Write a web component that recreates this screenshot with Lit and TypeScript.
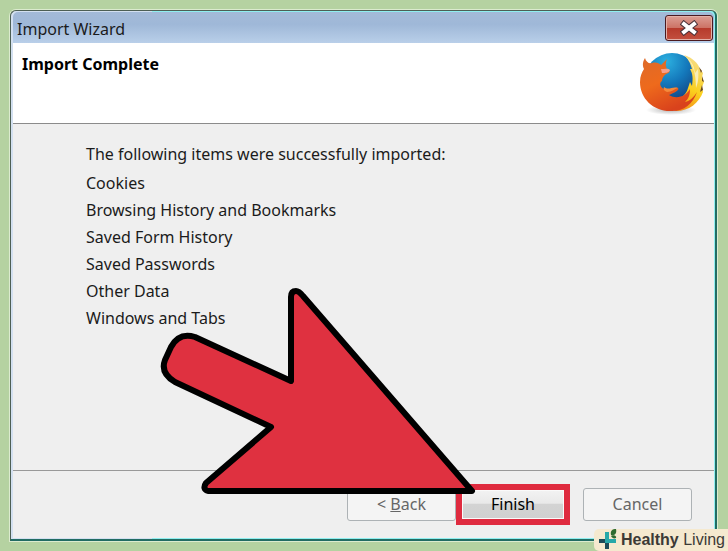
import { LitElement, html, css } from "lit";
import { customElement } from "lit/decorators.js";

const IMPORTED = [
  "Cookies",
  "Browsing History and Bookmarks",
  "Saved Form History",
  "Saved Passwords",
  "Other Data",
  "Windows and Tabs",
];

@customElement("firefox-logo")
class FirefoxLogo extends LitElement {
  static styles = css`
    :host { display: block; width: 68px; height: 64px; }
    svg { display: block; width: 100%; height: 100%; }
  `;
  render() {
    return html`
      <svg viewBox="0 0 68 64" aria-hidden="true">
        <defs>
          <radialGradient id="globe" cx="0.4" cy="0.15" r="0.85">
            <stop offset="0" stop-color="#2cb0e0" />
            <stop offset="0.45" stop-color="#1478bb" />
            <stop offset="1" stop-color="#12336f" />
          </radialGradient>
          <linearGradient id="fur" x1="0" y1="0" x2="0.5" y2="1">
            <stop offset="0" stop-color="#dd6a2a" />
            <stop offset="0.5" stop-color="#ee6a1c" />
            <stop offset="1" stop-color="#d9421c" />
          </linearGradient>
          <linearGradient id="tail" x1="0.6" y1="0" x2="0.2" y2="1">
            <stop offset="0" stop-color="#f6dc80" />
            <stop offset="0.5" stop-color="#fbd01d" />
            <stop offset="1" stop-color="#ef7a1a" />
          </linearGradient>
          <radialGradient id="shade">
            <stop offset="0" stop-color="#777" stop-opacity="0.55" />
            <stop offset="1" stop-color="#777" stop-opacity="0" />
          </radialGradient>
        </defs>
        <ellipse cx="33" cy="59" rx="25" ry="5" fill="url(#shade)" />
        <circle cx="34" cy="30" r="28" fill="url(#globe)" />
        <path fill="url(#tail)" d="M46 4 C55 7 60 12 62 18 L65 22 L64 26 L66 31 L64 36 L65 41 C61 52 51 60 38 60 L25 54 C39 52 48 45 50 37 L52 31 L54 35 C55 28 55 23 52 18 L54 18 C52 11 50 8 46 4Z" />
        <path fill="#f8edb8" d="M47 5 C54 10 56 15 57 22 L60 18 C61 26 60 32 58 37 C58 23 55 12 47 5Z" />
        <path fill="#6b4b24" d="M61 16 L64 20 L63 22Z M64 25 L66 31 L64 30Z M64 34 L65 39 L62 41Z" />
        <path fill="url(#fur)" d="M7 7 C8 11 11 13 14 12 C18 11 21 12 23 14 L29 8 C27 13 28 16 29 18 C33 19 32 22 28 23 C25 25 24 28 24 30 C21 32 22 36 26 38 C31 41 34 36 40 37 C42 39 36 42 31 44 C39 49 48 45 52 38 C52 45 50 48 47 51 C52 50 56 46 59 41 C55 53 46 60 34 60 C16 61 2 48 2 31 C2 25 4 21 6 18 C4 14 5 10 7 7Z" />
        <path fill="#f4a08c" d="M23 18 C26 18 31 17 32 19 C31 22 27 22 24 22Z" />
        <path fill="#f48a3c" d="M26 36 C31 40 34 35 40 37 C36 38 34 41 29 41 C26 40 25 38 26 36Z" />
      </svg>
    `;
  }
}

@customElement("pointer-arrow")
class PointerArrow extends LitElement {
  static styles = css`
    :host { display: block; width: 320px; height: 210px; pointer-events: none; }
    svg { display: block; width: 100%; height: 100%; }
  `;
  render() {
    return html`
      <svg viewBox="160 287 320 210" aria-hidden="true">
        <path
          fill="#df3140" stroke="#000" stroke-width="6" stroke-linejoin="round"
          d="M195 337 L291 381 L291 297 Q291 291 296 291 Q299 291 303 296 L472 491 L208 491 Q202 489 206 483 L271 427 L175 382 Q160 373 165 360 L171 347 Q179 332 195 337Z"
        />
      </svg>
    `;
  }
}

@customElement("app-root")
class AppRoot extends LitElement {
  static styles = css`
    :host {
      display: flex;
      box-sizing: border-box;
      position: relative;
      min-height: 100vh;
      padding: 10px 11px 10px 10px;
      background: #b5d2a1;
      color: #1b1b1b;
      font: 16px/27px "Noto Sans", "Open Sans", sans-serif;
    }
    .window {
      flex: 1;
      display: flex;
      flex-direction: column;
      border: 1px solid #4d5f54;
      border-right: 2px solid #226c63;
      border-bottom: 2px solid #226c63;
      border-radius: 6px 6px 0 0;
      padding: 1px 1px 1px 2px;
      background: linear-gradient(90deg, #d3e0f0 20%, #8feff0 20%);
      box-shadow: 0 0 0 1px #dcebcf;
    }
    .titlebar {
      display: flex;
      justify-content: space-between;
      align-items: flex-start;
      height: 31px;
      padding: 0 1px 0 4px;
      border-radius: 5px 5px 0 0;
      background: linear-gradient(#a3bad8, #9fb8d8 40%, #b9cfe9);
    }
    .title { margin: 0; font-size: 16px; font-weight: 400; line-height: 35px; }
    .close {
      display: grid;
      place-items: center;
      width: 48px;
      height: 26px;
      margin-top: 3px;
      padding: 0;
      border: 1px solid #4a1a20;
      border-radius: 3px;
      background: linear-gradient(#dc9e94, #cd7466 48%, #b63a2b 50%, #c3503f);
      box-shadow: inset 0 0 0 1px #e3b1a9;
    }
    .close svg { width: 18px; height: 16px; }
    .header {
      display: flex;
      justify-content: space-between;
      align-items: flex-start;
      min-height: 81px;
      box-sizing: border-box;
      padding: 8px 8px 0 9px;
      background: #fff;
      border-bottom: 1px solid #8b8b8b;
    }
    .heading { margin: 0; font-size: 16px; font-weight: 700; color: #000; }
    .content { flex: 1; padding: 17px 73px; background: #efefef; }
    .intro { margin: 0 0 2px; }
    .items { margin: 0; padding: 0; list-style: none; }
    .footer {
      display: flex;
      justify-content: flex-end;
      align-items: center;
      min-height: 67px;
      padding-right: 22px;
      background: #efefef;
      border-top: 1px solid #999;
    }
    .btn {
      width: 109px;
      height: 33px;
      padding: 0;
      border: 1px solid #adb2b5;
      border-radius: 3px;
      background: #f4f4f4;
      color: #666;
      font: inherit;
    }
    .target {
      position: relative;
      display: flex;
      margin-right: 13px;
      border: 6px solid #df2b3f;
    }
    .finish {
      width: 102px;
      height: 29px;
      border: 1px solid #fafafa;
      border-radius: 0;
      background: linear-gradient(#f2f2f2, #e9e9e9 45%, #d3d3d3 50%, #d0d0d0);
      color: #000;
    }
    .pointer { position: absolute; right: 84px; bottom: 22px; }
    .badge {
      position: absolute;
      right: 0;
      bottom: 0;
      display: flex;
      align-items: center;
      gap: 3px;
      height: 22px;
      padding: 0 3px 0 4px;
      border-radius: 5px 0 0 5px;
      background: #f5e9cf;
      color: #3c3a36;
      font: 16px/22px "Liberation Sans", Arial, sans-serif;
      white-space: nowrap;
    }
    .badge svg { width: 20px; height: 22px; }
  `;
  render() {
    return html`
      <main class="window">
        <div class="titlebar">
          <h1 class="title">Import Wizard</h1>
          <button class="close" aria-label="Close">
            <svg viewBox="0 0 18 16" aria-hidden="true">
              <path d="M4 4 L14 12 M14 4 L4 12" stroke="#4a3138" stroke-width="6" stroke-linecap="square" />
              <path d="M4 4 L14 12 M14 4 L4 12" stroke="#fff" stroke-width="4" stroke-linecap="square" />
            </svg>
          </button>
        </div>
        <header class="header">
          <h2 class="heading">Import Complete</h2>
          <firefox-logo></firefox-logo>
        </header>
        <section class="content">
          <p class="intro">The following items were successfully imported:</p>
          <ul class="items">${IMPORTED.map((item) => html`<li>${item}</li>`)}</ul>
        </section>
        <footer class="footer">
          <button class="btn">&lt; <u>B</u>ack</button>
          <div class="target">
            <button class="btn finish">Finish</button>
            <pointer-arrow class="pointer"></pointer-arrow>
          </div>
          <button class="btn">Cancel</button>
        </footer>
      </main>
      <div class="badge">
        <svg viewBox="0 0 20 22" aria-hidden="true">
          <path d="M7 3 H11 V10 H18 V14 H11 V20 H7Z" fill="#27a8a9" />
          <path d="M1 10 H7 V14 H1Z M7 14 H11 V20 H7Z" fill="#1d4a58" />
          <path d="M13 6 C12 1 15 0 18 0 C19 4 17 7 13 6Z M13 7 C16 5 19 7 18 9 C16 10 14 9 13 7Z" fill="#2d6b2e" />
        </svg>
        <span><b>Healthy</b> Living</span>
      </div>
    `;
  }
}
